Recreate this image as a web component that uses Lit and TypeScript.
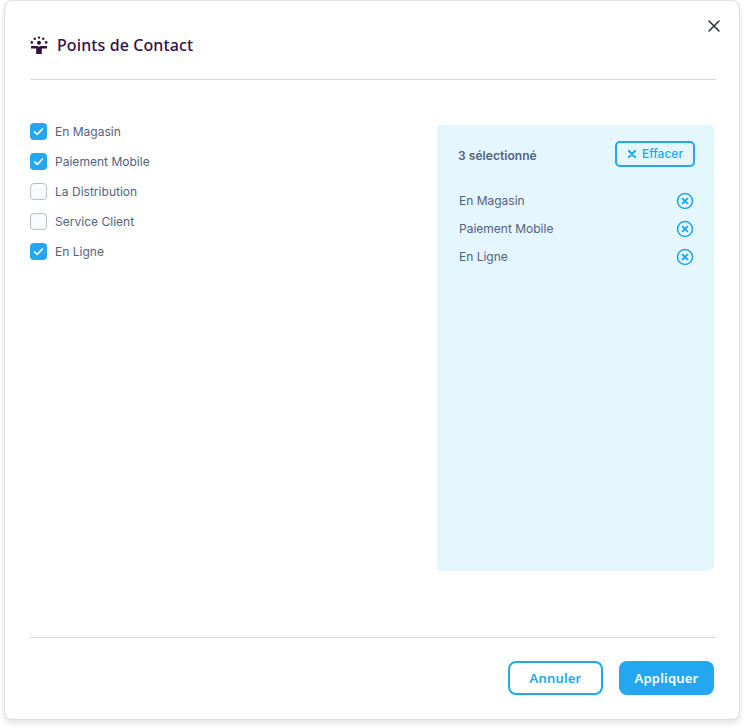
import { LitElement, html, css, svg } from "lit";
import { customElement } from "lit/decorators.js";

const options = [
  { label: "En Magasin", on: true },
  { label: "Paiement Mobile", on: true },
  { label: "La Distribution", on: false },
  { label: "Service Client", on: false },
  { label: "En Ligne", on: true },
];

const check = svg`<svg class="tick" viewBox="0 0 17 17" width="17" height="17"><path d="M4.6 8.8 7.3 11.4 12.4 6" fill="none" stroke="#fff" stroke-width="1.6" stroke-linecap="round" stroke-linejoin="round"/></svg>`;
const circleX = svg`<svg viewBox="0 0 18 18" width="18" height="18"><circle cx="9" cy="9" r="7.5" fill="none" stroke="#22a7f0" stroke-width="1.6"/><path d="M6.6 6.6 11.4 11.4M11.4 6.6 6.6 11.4" fill="none" stroke="#22a7f0" stroke-width="1.9" stroke-linecap="round"/></svg>`;

@customElement("app-root")
export class AppRoot extends LitElement {
  static styles = css`
    :host { display: block; width: 744px; height: 728px; background: #fff; font-family: Inter, sans-serif; }
    .card { box-sizing: border-box; width: 736px; height: 720px; margin: 0 4px; background: #fff; border: 1px solid #dcdcdc; border-top-color: #e2e2e2; border-radius: 8px; box-shadow: 0 4px 6px rgba(0,0,0,.1); padding: 0 23px 0 25px; display: flex; flex-direction: column; position: relative; }
    .close { position: absolute; top: 18px; right: 18px; width: 14px; height: 14px; display: block; }
    .head { height: 79px; box-sizing: border-box; padding-top: 34px; display: flex; align-items: flex-start; gap: 9px; border-bottom: 1px solid #d9d9d9; }
    .head svg { display: block; margin-top: 1px; }
    .title { font: 500 16px/20px "Noto Sans", sans-serif; color: #33103f; letter-spacing: .1px; }
    .body { flex: 1; display: flex; justify-content: space-between; padding-top: 45px; }
    .list { display: flex; flex-direction: column; gap: 13px; margin-top: -2px; }
    .opt { display: flex; align-items: center; gap: 8px; height: 17px; font-size: 12px; color: #54627e; letter-spacing: .02px; }
    .box { width: 17px; height: 17px; box-sizing: border-box; border-radius: 4px; flex: none; }
    .box.on { background: #22a7f0; }
    .box.off { background: #f9fafc; border: 1px solid #b9bdc6; }
    .tick { display: block; }
    .panel { width: 277px; height: 446px; margin-right: 2px; background: #e4f6fe; border-radius: 5px; box-sizing: border-box; padding: 16px 19px 0 21px; }
    .top { display: flex; align-items: center; justify-content: space-between; height: 26px; }
    .count { font-size: 12px; font-weight: 600; color: #54627e; padding-top: 3px; letter-spacing: .05px; }
    .clear { width: 80px; height: 26px; box-sizing: border-box; border: 2px solid #22a7f0; border-radius: 5px; display: flex; align-items: center; justify-content: center; gap: 5px; color: #22a7f0; font-size: 12px; font-weight: 500; padding-bottom: 1px; }
    .rows { margin-top: 25px; display: flex; flex-direction: column; gap: 10px; }
    .row { display: flex; align-items: center; justify-content: space-between; height: 18px; padding-left: 1px; font-size: 12px; color: #54627e; }
    .row span { padding-bottom: 2px; }
    .row svg { display: block; margin-right: 1px; }
    .foot { height: 82px; box-sizing: border-box; border-top: 1px solid #d9d9d9; display: flex; justify-content: flex-end; gap: 16px; padding-top: 23px; }
    .btn { width: 95px; height: 34px; box-sizing: border-box; border-radius: 8px; display: flex; align-items: center; justify-content: center; font: 600 13px "Noto Sans", sans-serif; letter-spacing: .2px; }
    .ghost { border: 2px solid #22a7f0; color: #22a7f0; background: #fff; }
    .solid { background: #22a7f0; color: #fff; margin-right: 2px; }
  `;

  render() {
    const picked = options.filter((o) => o.on);
    return html`
      <div class="card">
        <svg class="close" viewBox="0 0 14 14"><path d="M2 2 12 12M12 2 2 12" stroke="#1f2d3d" stroke-width="1.5" stroke-linecap="round" fill="none"/></svg>
        <div class="head">
          <svg viewBox="0 0 18 18" width="18" height="18" fill="#33103f">
            <circle cx="9" cy="1.6" r="1.2"/><circle cx="4.8" cy="2.8" r="1.2"/><circle cx="13.2" cy="2.8" r="1.2"/>
            <circle cx="1.8" cy="6.4" r="1.3"/><circle cx="16.2" cy="6.4" r="1.3"/><circle cx="9" cy="6.8" r="2"/>
            <path d="M1 10H7.2L9 10.8 10.8 10H17V12.4H11.8V18H6.2V12.4H1Z"/>
          </svg>
          <div class="title">Points de Contact</div>
        </div>
        <div class="body">
          <div class="list">
            ${options.map((o) => html`<div class="opt"><span class="box ${o.on ? "on" : "off"}">${o.on ? check : ""}</span>${o.label}</div>`)}
          </div>
          <div class="panel">
            <div class="top">
              <span class="count">${picked.length} sélectionné</span>
              <span class="clear"><svg viewBox="0 0 10 10" width="10" height="10"><path d="M2 2 8 8M8 2 2 8" stroke="#22a7f0" stroke-width="2.2" stroke-linecap="round"/></svg>Effacer</span>
            </div>
            <div class="rows">
              ${picked.map((o) => html`<div class="row"><span>${o.label}</span>${circleX}</div>`)}
            </div>
          </div>
        </div>
        <div class="foot">
          <div class="btn ghost">Annuler</div>
          <div class="btn solid">Appliquer</div>
        </div>
      </div>
    `;
  }
}
